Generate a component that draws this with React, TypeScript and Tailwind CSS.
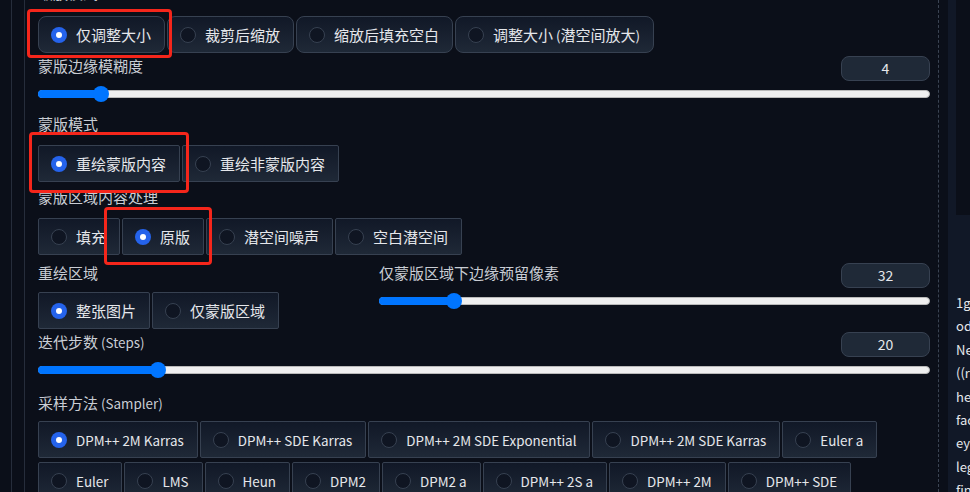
import React from "react";

function T({ s }: { s: string }) {
  const parts = s.split(/([\x00-\x7F]+)/).filter((p) => p.length > 0);
  return (
    <>
      {parts.map((p, i) =>
        /^[\x00-\x7F]+$/.test(p) ? (
          <span key={i} className="text-[13.4px]">
            {p}
          </span>
        ) : (
          <React.Fragment key={i}>{p}</React.Fragment>
        )
      )}
    </>
  );
}

function Radio({ label, checked = false, rounded = false }: { label: string; checked?: boolean; rounded?: boolean }) {
  return (
    <div
      className={
        "flex items-center h-[37px] pl-3 pr-[13px] border border-[#374151] bg-gradient-to-t from-[#1f2937] to-[#111827] whitespace-nowrap " +
        (rounded ? "rounded-lg" : "rounded-[2px]")
      }
    >
      {checked ? (
        <span className="w-4 h-4 rounded-full bg-[#2563eb] flex items-center justify-center shrink-0">
          <span className="w-[6px] h-[6px] rounded-full bg-white" />
        </span>
      ) : (
        <span className="w-4 h-4 rounded-full border border-[#374151] bg-[#0f1522] shrink-0" />
      )}
      <span className="ml-[9px] text-[15px] leading-[20px] text-[#e5e7eb]">
        <T s={label} />
      </span>
    </div>
  );
}

function Label({ text }: { text: string }) {
  return (
    <div className="text-[15px] leading-[20px] text-[#c9cdd4] whitespace-nowrap">
      <T s={text} />
    </div>
  );
}

function NumBox({ value }: { value: string }) {
  return (
    <div className="w-[89px] h-[25px] rounded-lg border border-[#374151] bg-[#1f2937] flex items-center justify-center text-[14px] text-[#e5e7eb]">
      {value}
    </div>
  );
}

function Slider({ ratio }: { ratio: number }) {
  return (
    <div className="relative h-4">
      <div className="absolute left-0 right-0 top-[4px] h-2 rounded-full bg-[#efefef] border border-[#b9b9b9]" />
      <div
        className="absolute left-0 top-[4px] h-2 rounded-full bg-[#0075ff]"
        style={{ width: `calc(8px + ${ratio} * (100% - 16px))` }}
      />
      <div
        className="absolute top-0 w-4 h-4 rounded-full bg-[#0075ff]"
        style={{ left: `calc(${ratio} * (100% - 16px))` }}
      />
    </div>
  );
}

const samplers = [
  "DPM++ 2M Karras",
  "DPM++ SDE Karras",
  "DPM++ 2M SDE Exponential",
  "DPM++ 2M SDE Karras",
  "Euler a",
  "Euler",
  "LMS",
  "Heun",
  "DPM2",
  "DPM2 a",
  "DPM++ 2S a",
  "DPM++ 2M",
  "DPM++ SDE",
  "DPM++ 2M SDE",
  "DPM++ 2M SDE Heun",
  "DPM++ 3M SDE",
];

const promptLines = [
  "1girl, solo,",
  "odd eyes,",
  "Negative",
  "((realistic))",
  "head",
  "face",
  "eyes",
  "legs",
  "finger",
];

export default function App() {
  return (
    <div className="relative w-[970px] h-[492px] overflow-hidden bg-[#0b0f19] flex font-['Noto_Sans_CJK_SC',sans-serif]">
      <div className="flex w-[948px] h-full shrink-0 pl-[11px]">
        <div className="flex h-full border-l border-[#262d3b] pl-[12px]">
          <div className="flex h-full border-l border-[#262d3b]">
            <div className="w-[892px] ml-[13px] mr-[8px] -mt-[17px] flex flex-col">
              <Label text="缩放模式" />
              <div className="mt-[13px] flex gap-[2px]">
                <Radio label="仅调整大小" checked rounded />
                <Radio label="裁剪后缩放" rounded />
                <Radio label="缩放后填充空白" rounded />
                <Radio label="调整大小 (潜空间放大)" rounded />
              </div>

              <div className="mt-[3px] flex justify-between items-start">
                <Label text="蒙版边缘模糊度" />
                <NumBox value="4" />
              </div>
              <div className="mt-[5px]">
                <Slider ratio={4 / 64} />
              </div>

              <div className="mt-[12px]">
                <Label text="蒙版模式" />
              </div>
              <div className="mt-[11px] flex gap-[2px]">
                <Radio label="重绘蒙版内容" checked />
                <Radio label="重绘非蒙版内容" />
              </div>

              <div className="mt-[5px]">
                <Label text="蒙版区域内容处理" />
              </div>
              <div className="mt-[11px] flex gap-[2px]">
                <Radio label="填充" />
                <Radio label="原版" checked />
                <Radio label="潜空间噪声" />
                <Radio label="空白潜空间" />
              </div>

              <div className="mt-[8px] flex">
                <div className="w-[341px] shrink-0 flex flex-col">
                  <Label text="重绘区域" />
                  <div className="mt-[9px] flex gap-[2px]">
                    <Radio label="整张图片" checked />
                    <Radio label="仅蒙版区域" />
                  </div>
                </div>
                <div className="flex-1 flex flex-col">
                  <div className="flex justify-between items-start">
                    <Label text="仅蒙版区域下边缘预留像素" />
                    <NumBox value="32" />
                  </div>
                  <div className="mt-[5px]">
                    <Slider ratio={32 / 256} />
                  </div>
                </div>
              </div>

              <div className="mt-[3px] flex justify-between items-start">
                <Label text="迭代步数 (Steps)" />
                <NumBox value="20" />
              </div>
              <div className="mt-[5px]">
                <Slider ratio={19 / 149} />
              </div>

              <div className="mt-[15px]">
                <Label text="采样方法 (Sampler)" />
              </div>
              <div className="mt-[8px] flex flex-wrap gap-x-[2px] gap-y-1">
                {samplers.map((s, i) => (
                  <Radio key={s} label={s} checked={i === 0} />
                ))}
              </div>
            </div>
          </div>
          <div className="h-full border-l border-dashed border-[#3b4453]" />
        </div>
      </div>

      <div className="flex-1 h-full bg-[#111827] flex flex-col overflow-hidden">
        <div className="ml-[8px] h-[215px] bg-[#0b0f19] shrink-0" />
        <div className="mt-[76px] pl-[8px] flex flex-col">
          {promptLines.map((l) => (
            <div key={l} className="text-[13px] leading-[23.4px] text-[#e5e7eb] whitespace-nowrap">
              {l}
            </div>
          ))}
        </div>
      </div>

      <div className="absolute left-[27px] top-[9px] w-[145px] h-[49px] border-[3px] border-[#f5261b] rounded-[4px]" />
      <div className="absolute left-[29px] top-[132px] w-[160px] h-[61px] border-[3px] border-[#f5261b] rounded-[4px]" />
      <div className="absolute left-[104px] top-[207px] w-[108px] h-[58px] border-[3px] border-[#f5261b] rounded-[4px]" />
    </div>
  );
}
